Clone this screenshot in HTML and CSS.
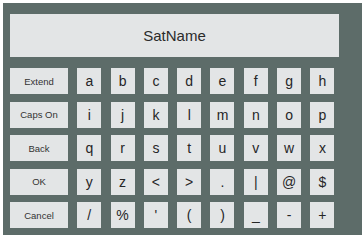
FILE: index.html
```html
<!DOCTYPE html>
<html lang="en">
<head>
    <meta charset="UTF-8">
    <title>Keyboard</title>
    <link rel="stylesheet" href="styles.css">
</head>
<body>
    <div class="keyboard">
        <div class="title">SatName</div>
        <div class="keys">
            <button class="cmd">Extend</button>
            <button>a</button><button>b</button><button>c</button><button>d</button>
            <button>e</button><button>f</button><button>g</button><button>h</button>

            <button class="cmd">Caps On</button>
            <button>i</button><button>j</button><button>k</button><button>l</button>
            <button>m</button><button>n</button><button>o</button><button>p</button>

            <button class="cmd">Back</button>
            <button>q</button><button>r</button><button>s</button><button>t</button>
            <button>u</button><button>v</button><button>w</button><button>x</button>

            <button class="cmd">OK</button>
            <button>y</button><button>z</button><button>&lt;</button><button>&gt;</button>
            <button>.</button><button>|</button><button>@</button><button>$</button>

            <button class="cmd">Cancel</button>
            <button>/</button><button>%</button><button>'</button><button>(</button>
            <button>)</button><button>_</button><button>-</button><button>+</button>
        </div>
    </div>
</body>
</html>
```

FILE: styles.css
```css
body {
    margin: 0;
    padding: 3px 0 0 3px;
    background: #ffffff;
    font-family: "Liberation Sans", Arial, sans-serif;
}
.keyboard {
    width: 359px;
    height: 232px;
    box-sizing: border-box;
    padding: 11px 0 0 7px;
    background: #5d6c69;
}
.title {
    width: 329px;
    height: 43px;
    background: #e3e5e6;
    color: #2b2b2b;
    font-size: 15px;
    display: flex;
    align-items: center;
    justify-content: center;
}
.keys {
    margin-top: 11px;
    display: grid;
    grid-template-columns: 58px repeat(8, 24px);
    grid-auto-rows: 26px;
    column-gap: 9.3px;
    row-gap: 7.5px;
}
button {
    border: none;
    padding: 0;
    margin: 0;
    background: #e3e5e6;
    color: #262626;
    font-family: "Liberation Sans", Arial, sans-serif;
    font-size: 14px;
}
button.cmd {
    font-size: 9.5px;
    color: #333;
}
```
